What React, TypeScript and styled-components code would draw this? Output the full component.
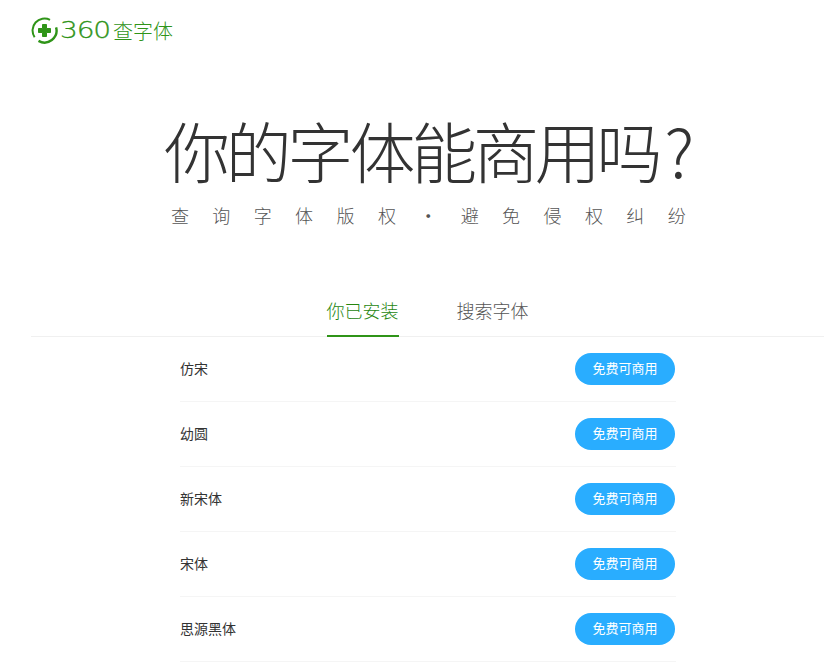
import React, { useState } from "react";
import styled, { createGlobalStyle } from "styled-components";

const GlobalStyle = createGlobalStyle`
  html, body {
    margin: 0;
    padding: 0;
    background: #fff;
    overflow: hidden;
  }
  body {
    font-family: "Liberation Sans", "Noto Sans CJK SC", sans-serif;
  }
`;

const Page = styled.div`
  width: 832px;
  height: 664px;
  overflow: hidden;
  display: flex;
  flex-direction: column;
`;

const Header = styled.header`
  height: 62px;
  padding: 17px 0 0 31px;
  box-sizing: border-box;
  display: flex;
  align-items: flex-start;
`;

const Logo = styled.a`
  display: flex;
  align-items: center;
  height: 27px;
  gap: 2px;
  color: #2f9418;
  text-decoration: none;
`;

const LogoDigits = styled.span`
  font-family: "DejaVu Sans", sans-serif;
  font-size: 23px;
  font-weight: 200;
  line-height: 27px;
  width: 51px;
  display: inline-block;
  transform: scaleX(1.22);
  transform-origin: left center;
  letter-spacing: -1px;
  -webkit-text-stroke: 0.3px #2f9418;
`;

const LogoName = styled.span`
  font-family: "Noto Sans CJK SC", sans-serif;
  font-size: 20px;
  font-weight: 300;
  line-height: 27px;
`;

const Hero = styled.section`
  display: flex;
  flex-direction: column;
  align-items: center;
`;

const Title = styled.h1`
  margin: 39px 0 0 22px;
  height: 98px;
  font-family: "Noto Sans CJK SC", sans-serif;
  font-size: 66px;
  font-weight: 300;
  line-height: 96px;
  letter-spacing: -4.2px;
  color: #333;
  white-space: nowrap;
`;

const TitleMark = styled.span`
  display: inline-block;
  margin-left: 6px;
`;

const Subtitle = styled.p`
  margin: 0 0 0 48px;
  height: 32px;
  font-family: "Noto Sans CJK SC", sans-serif;
  font-size: 18px;
  font-weight: 300;
  line-height: 32px;
  letter-spacing: 23.4px;
  color: #555;
  white-space: nowrap;
`;

const SubtitleDot = styled.span`
  display: inline-block;
  width: 18px;
  text-align: center;
  font-weight: 400;
  letter-spacing: 0;
  margin-right: 23.4px;
`;

const Tabs = styled.nav`
  margin: 58px 8px 0 31px;
  height: 47px;
  border-bottom: 1px solid #f0f0f0;
  display: flex;
  justify-content: center;
  gap: 58px;
`;

const Tab = styled.button<{ $active?: boolean }>`
  height: 48px;
  padding: 0 0 4px 0;
  border: 0;
  border-bottom: 2px solid ${({ $active }) => ($active ? "#2f9418" : "transparent")};
  background: none;
  font-family: "Noto Sans CJK SC", sans-serif;
  font-size: 18px;
  font-weight: 300;
  line-height: 42px;
  color: ${({ $active }) => ($active ? "#26860f" : "#555")};
  cursor: pointer;
  box-sizing: border-box;
`;

const FontList = styled.ul`
  list-style: none;
  margin: 0 0 0 180px;
  padding: 0;
  width: 496px;
`;

const FontRow = styled.li`
  height: 65px;
  box-sizing: border-box;
  border-bottom: 1px solid #f5f5f5;
  display: flex;
  align-items: center;
  justify-content: space-between;
  padding: 0 1px 0 0;
`;

const FontName = styled.span`
  font-family: "Noto Sans CJK SC", sans-serif;
  font-size: 14px;
  line-height: 20px;
  margin-bottom: 2px;
  color: #333;
`;

const LicenseButton = styled.button`
  width: 100px;
  height: 32px;
  border: 0;
  border-radius: 16px;
  background: #29adff;
  color: #fff;
  font-family: "Noto Sans CJK SC", sans-serif;
  font-size: 13px;
  line-height: 30px;
  padding: 0 0 2px 0;
  cursor: pointer;
`;

const LogoMark = () => (
  <svg width="27" height="27" viewBox="0 0 27 27" fill="none">
    <path d="M19 2.8A12 12 0 0 0 3.6 20.2" stroke="#2f9418" strokeWidth="2" />
    <path d="M25.1 10.4A12 12 0 0 1 7.5 23.9" stroke="#2f9418" strokeWidth="2.4" />
    <path
      d="M11.5 7.5H15.5V11.5H19.5V15.5H15.5V19.5H11.5V15.5H7.5V11.5H11.5Z"
      fill="#2f9418"
      stroke="#2f9418"
      strokeWidth="1"
      strokeLinejoin="round"
    />
  </svg>
);

const fonts = ["仿宋", "幼圆", "新宋体", "宋体", "思源黑体"];

export default function App() {
  const [tab, setTab] = useState(0);
  return (
    <Page>
      <GlobalStyle />
      <Header>
        <Logo href="#">
          <LogoMark />
          <LogoDigits>360</LogoDigits>
          <LogoName>查字体</LogoName>
        </Logo>
      </Header>
      <Hero>
        <Title>
          你的字体能商用吗<TitleMark>?</TitleMark>
        </Title>
        <Subtitle>
          查询字体版权<SubtitleDot>·</SubtitleDot>避免侵权纠纷
        </Subtitle>
      </Hero>
      <Tabs>
        {["你已安装", "搜索字体"].map((name, i) => (
          <Tab key={name} $active={tab === i} onClick={() => setTab(i)}>
            {name}
          </Tab>
        ))}
      </Tabs>
      <FontList>
        {fonts.map((name) => (
          <FontRow key={name}>
            <FontName>{name}</FontName>
            <LicenseButton>免费可商用</LicenseButton>
          </FontRow>
        ))}
      </FontList>
    </Page>
  );
}
